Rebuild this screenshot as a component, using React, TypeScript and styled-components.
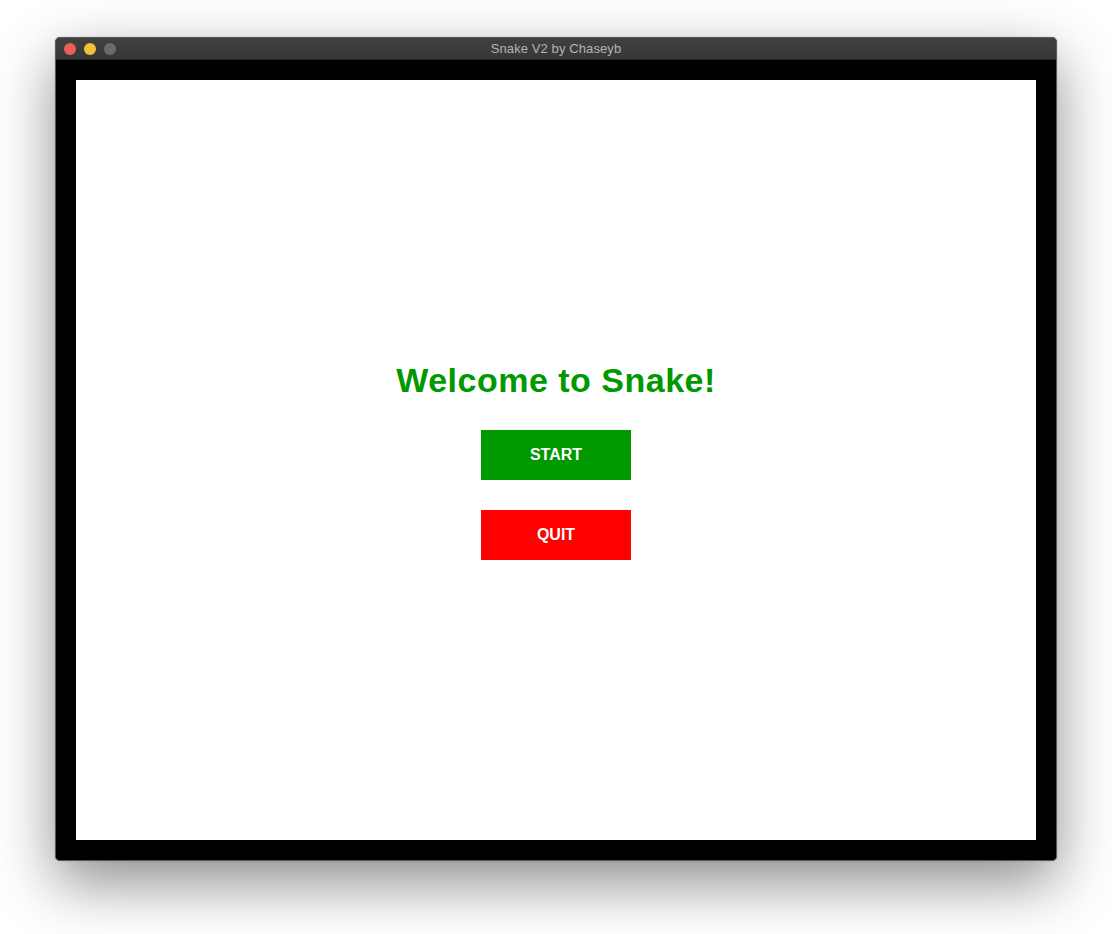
import React from "react";
import styled, { createGlobalStyle } from "styled-components";

const Global = createGlobalStyle`
  html, body { margin: 0; padding: 0; background: #ffffff; }
  body { font-family: "Liberation Sans", Arial, sans-serif; }
`;

const Page = styled.div`
  width: 1112px;
  height: 934px;
  padding-top: 37px;
  padding-left: 55px;
  box-sizing: border-box;
  overflow: hidden;
`;

const Window = styled.div`
  width: 1002px;
  border: 1px solid #5a5a5a;
  border-radius: 5px;
  overflow: hidden;
  box-sizing: border-box;
  background: #000;
  box-shadow: 0 22px 60px rgba(0, 0, 0, 0.45), 0 0 1px rgba(0, 0, 0, 0.5);
`;

const TitleBar = styled.div`
  position: relative;
  height: 22px;
  background: linear-gradient(#404040, #373737);
  display: flex;
  align-items: center;
  justify-content: center;
  border-bottom: 1px solid #222;
  box-sizing: border-box;
`;

const Lights = styled.div`
  position: absolute;
  left: 8px;
  top: 5px;
  display: flex;
  gap: 8px;
`;

const Light = styled.span<{ $color: string }>`
  width: 12px;
  height: 12px;
  border-radius: 50%;
  background: ${(p) => p.$color};
`;

const Title = styled.div`
  font-family: "Liberation Sans", Arial, sans-serif;
  font-size: 13px;
  color: #b3b3b3;
  letter-spacing: 0.1px;
`;

const Body = styled.div`
  padding: 20px;
  background: #000;
`;

const Canvas = styled.div`
  width: 960px;
  height: 760px;
  background: #ffffff;
  display: flex;
  flex-direction: column;
  align-items: center;
  justify-content: center;
  box-sizing: border-box;
`;

const Heading = styled.h1`
  margin: 0 0 30px 0;
  font-family: "Liberation Sans", Arial, sans-serif;
  font-weight: bold;
  font-size: 34px;
  line-height: 40px;
  letter-spacing: 0.5px;
  color: #009900;
`;

const Button = styled.div<{ $bg: string }>`
  width: 150px;
  height: 50px;
  background: ${(p) => p.$bg};
  color: #ffffff;
  font-family: "Liberation Sans", Arial, sans-serif;
  font-weight: bold;
  font-size: 16px;
  display: flex;
  align-items: center;
  justify-content: center;
  & + & {
    margin-top: 30px;
  }
`;

export default function App() {
  return (
    <>
      <Global />
      <Page>
        <Window>
          <TitleBar>
            <Lights>
              <Light $color="#ec5f56" />
              <Light $color="#f4bf3e" />
              <Light $color="#6a6a6a" />
            </Lights>
            <Title>Snake V2 by Chaseyb</Title>
          </TitleBar>
          <Body>
            <Canvas>
              <Heading>Welcome to Snake!</Heading>
              <Button $bg="#009900">START</Button>
              <Button $bg="#ff0000">QUIT</Button>
            </Canvas>
          </Body>
        </Window>
      </Page>
    </>
  );
}
